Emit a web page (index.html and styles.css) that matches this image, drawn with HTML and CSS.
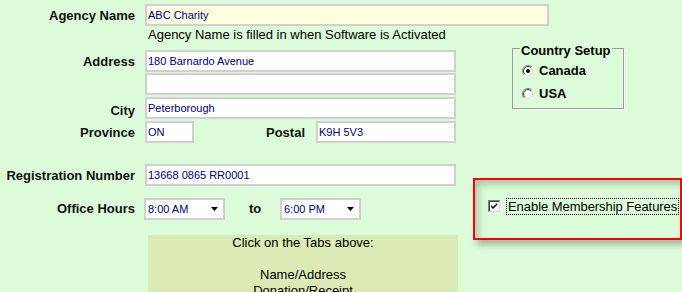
FILE: index.html
```html
<!DOCTYPE html>

<html>
<head>
  <meta http-equiv="Content-Type" content="text/html; charset=UTF-8">
  <title>Agency Setup</title>

  <link rel="stylesheet" href="styles.css">
</head>
<body>
  <form class="setup">
    <div class="row row-agency">
      <label class="lbl" for="agency">Agency Name</label>
      <input class="field field-agency" id="agency" value="ABC Charity">
    </div>

    <div class="main">
      <div class="left">
        <p class="note">Agency Name is filled in when Software is Activated</p>

        <div class="row row-address">
          <label class="lbl" for="addr1">Address</label>
          <input class="field field-wide" id="addr1" value="180 Barnardo Avenue">
        </div>
        <div class="row row-address2">
          <span class="lbl"></span>
          <input class="field field-wide" id="addr2" value="">
        </div>
        <div class="row row-city">
          <label class="lbl lbl-city" for="city">City</label>
          <input class="field field-wide" id="city" value="Peterborough">
        </div>
        <div class="row row-province">
          <label class="lbl" for="prov">Province</label>
          <input class="field field-prov" id="prov" value="ON">
          <label class="lbl lbl-postal" for="postal">Postal</label>
          <input class="field field-postal" id="postal" value="K9H 5V3">
        </div>

        <div class="row row-reg">
          <label class="lbl" for="reg">Registration Number</label>
          <input class="field field-wide" id="reg" value="13668 0865 RR0001">
        </div>
        <div class="row row-hours">
          <span class="lbl lbl-hours">Office Hours</span>
          <div class="select">
            <span>8:00 AM</span>
            <svg width="7" height="4" viewBox="0 0 7 4"><path d="M0 0H7L3.5 4Z" fill="#000"/></svg>
          </div>
          <span class="lbl lbl-to">to</span>
          <div class="select">
            <span>6:00 PM</span>
            <svg width="7" height="4" viewBox="0 0 7 4"><path d="M0 0H7L3.5 4Z" fill="#000"/></svg>
          </div>
        </div>

        <div class="tabs-help">
          Click on the Tabs above:<br>
          <br>
          Name/Address<br>
          Donation/Receipt
        </div>
      </div>

      <div class="side">
        <fieldset class="country">
          <legend>Country Setup</legend>
          <div class="radio">
            <svg width="12" height="12" viewBox="0 0 12 12">
              <circle cx="6" cy="6" r="5.5" fill="#fff"/>
              <path d="M2.1 9.9A5.5 5.5 0 0 1 9.9 2.1" fill="none" stroke="#808080"/>
              <path d="M2.8 9.2A4.5 4.5 0 0 1 9.2 2.8" fill="none" stroke="#404040"/>
              <path d="M9.2 2.8A4.5 4.5 0 0 1 2.8 9.2" fill="none" stroke="#d4d0c8"/>
              <circle cx="6" cy="6" r="2" fill="#000"/>
            </svg>
            <span>Canada</span>
          </div>
          <div class="radio">
            <svg width="12" height="12" viewBox="0 0 12 12">
              <circle cx="6" cy="6" r="5.5" fill="#fff"/>
              <path d="M2.1 9.9A5.5 5.5 0 0 1 9.9 2.1" fill="none" stroke="#808080"/>
              <path d="M2.8 9.2A4.5 4.5 0 0 1 9.2 2.8" fill="none" stroke="#404040"/>
              <path d="M9.2 2.8A4.5 4.5 0 0 1 2.8 9.2" fill="none" stroke="#d4d0c8"/>
            </svg>
            <span>USA</span>
          </div>
        </fieldset>

        <div class="member">
          <div class="check">
            <svg width="13" height="13" viewBox="0 0 13 13">
              <rect width="13" height="13" fill="#fff"/>
              <rect width="12" height="1" fill="#808080"/>
              <rect width="1" height="12" fill="#808080"/>
              <rect x="1" y="1" width="10" height="1" fill="#404040"/>
              <rect x="1" y="1" width="1" height="10" fill="#404040"/>
              <rect x="1" y="11" width="11" height="1" fill="#d4d0c8"/>
              <rect x="11" y="1" width="1" height="11" fill="#d4d0c8"/>
              <path d="M3 5L5 7L9 3V5L5 9L3 7Z" fill="#000"/>
            </svg>
            <span class="check-text">Enable Membership Features</span>
          </div>
        </div>
      </div>
    </div>
  </form>
</body>
</html>
```

FILE: styles.css
```css
/* reset things */
* {
  margin: 0; padding: 0;
  box-sizing: border-box;
}
html, body {
  width: 100%;
  height: 100%;
  overflow: hidden;
}
body {
  background-color: #DCFBD8;
  font: normal 13px/16px "Liberation Sans", Arial, sans-serif;
  color: #000;
}

.setup {
  padding-top: 4px;
}

/* one label + field line */
.row {
  display: flex;
  align-items: center;
  height: 22px;
}
  .lbl {
    flex: none;
    width: 135px;
    margin-right: 10px;
    padding-top: 2px;
    text-align: right;
    font-weight: bold;
    color: #111;
  }
  .lbl-city { padding-top: 6px; }
  .lbl-hours { padding-top: 0; margin-right: 9px; }
  .lbl-postal {
    width: 111px;
    margin-right: 11px;
  }
  .lbl-to {
    width: 14px;
    margin: 0 17px 0 24px;
    padding-top: 0;
    text-align: left;
  }

.field {
  height: 22px;
  padding: 0 1px 1px;
  border: 2px solid #D0D0D0;
  background: #FFF;
  font: normal 11px "Liberation Sans", Arial, sans-serif;
  color: #000080;
  outline: none;
}
  .field-agency {
    width: 404px;
    background: #FFFFE0;
  }
  .field-wide   { width: 311px; }
  .field-prov   { width: 49px; }
  .field-postal { width: 140px; }

.select {
  display: flex;
  align-items: center;
  justify-content: space-between;
  width: 81px;
  height: 22px;
  padding: 0 5px 1px 2px;
  border: 2px solid #D0D0D0;
  background: #FFF;
  font-size: 11px;
  color: #000080;
}

.main {
  display: flex;
}
  .left {
    flex: none;
    width: 460px;
  }
    .note {
      margin: 1px 0 0 148px;
      white-space: nowrap;
    }
    .row-address  { margin-top: 7px; }
    .row-address2 { margin-top: 1px; }
    .row-city     { margin-top: 2px; }
    .row-province { margin-top: 2px; }
    .row-reg      { margin-top: 21px; }
    .row-hours    { margin-top: 12px; }

    .tabs-help {
      width: 310px;
      height: 90px;
      margin: 15px 0 0 148px;
      background: #DCEBB5;
      text-align: center;
    }

  .side {
    flex: none;
    width: 209px;
    margin-left: 13px;
  }

.country {
  width: 112px;
  margin: 12px 0 0 39px;
  padding: 0 7px 3px;
  border: 1px solid #9C9C9C;
  box-shadow: 1px 1px 0 #FFF;
  font-weight: bold;
}
  .country legend {
    padding: 5px 1px 0;
    line-height: 16px;
  }
  .radio {
    display: flex;
    align-items: center;
    height: 23px;
    padding-left: 2px;
  }
    .radio svg {
      margin-right: 5px;
    }

.member {
  height: 62px;
  margin-top: 69px;
  padding: 18px 0 0 13px;
  border: 2px solid #FF0000;
  box-shadow: 4px 5px 6px rgba(0, 0, 0, .25), inset 4px 5px 6px rgba(0, 0, 0, .2);
}
  .check {
    display: flex;
    align-items: center;
  }
    .check svg {
      flex: none;
      margin-right: 5px;
    }
    .check-text {
      padding: 0 1px;
      border: 1px dotted #000;
      line-height: 15px;
      letter-spacing: -0.05px;
      white-space: nowrap;
    }
```
